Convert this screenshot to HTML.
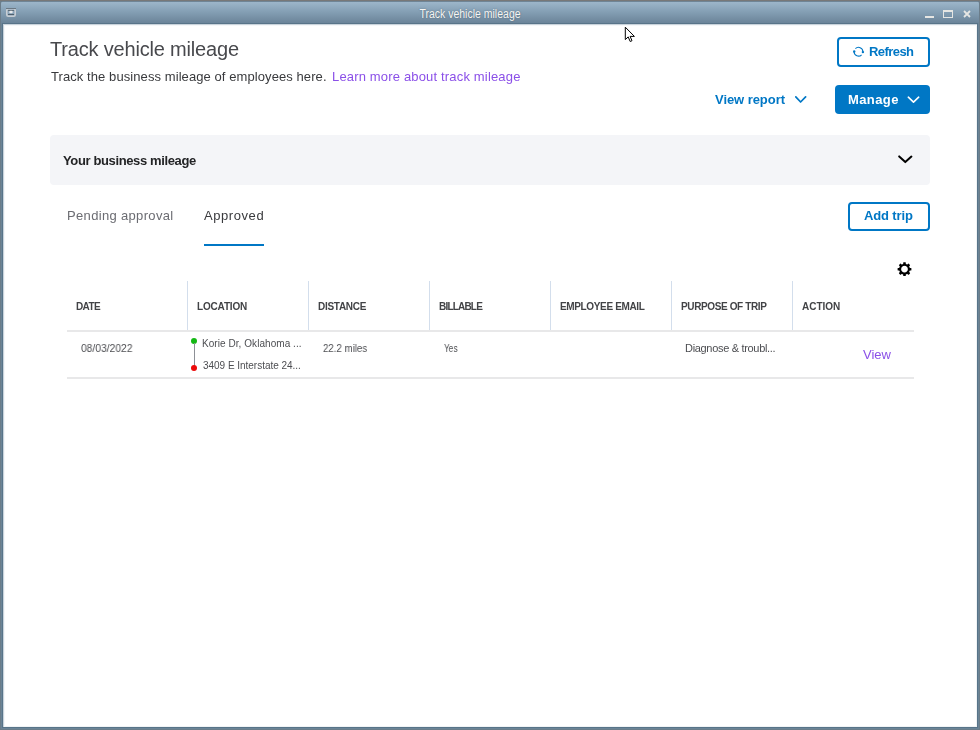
<!DOCTYPE html>
<html><head><meta charset="utf-8">
<style>
*{margin:0;padding:0;box-sizing:border-box}
html,body{width:980px;height:730px;overflow:hidden;background:#6b7d8a;font-family:"Liberation Sans",sans-serif;-webkit-font-smoothing:antialiased}
.t,.hdr,.cell{will-change:transform}
.abs{position:absolute}
#frame{position:absolute;left:1px;top:1px;width:978px;height:728px;background:#6b8497;border-radius:3px 3px 0 0}
#dark{position:absolute;left:2px;top:23px;width:976px;height:705px;background:#587489}
#tb{position:absolute;left:1px;top:1px;width:978px;height:22px;border-radius:3px 3px 0 0;
 background:linear-gradient(#6f8596 0,#6f8596 1px,#9db6ca 1px,#86a1b6 45%,#6b8499 100%);}
#ttl{position:absolute;left:0;top:7px;width:940px;text-align:center;font-size:12px;color:#f6f6f4;text-shadow:0 0 1.5px rgba(30,45,60,.55);transform:scaleX(0.875);transform-origin:470px 0}
#content{position:absolute;left:3px;top:24px;width:974px;height:703px;background:#fff;box-shadow:inset 1px 1px 0 #c9d3db,inset 2px 2px 0 #f5f7f9,inset -1px -1px 0 #f0f3f5}
.t{position:absolute;white-space:nowrap;line-height:1}
.btn{position:absolute;border:2px solid #0077c5;border-radius:4px;background:#fff}
.blue{color:#0077c5}
.hdr{position:absolute;top:302px;font-size:10px;font-weight:bold;color:#424346;white-space:nowrap;line-height:1}
.vl{position:absolute;top:281px;width:1px;height:50px;background:#d3deec}
.cell{position:absolute;font-size:11px;color:#4d4e52;white-space:nowrap;line-height:1}
</style></head><body>
<div class="abs" style="left:0;top:0;width:980px;height:1px;background:#787878"></div>
<div id="frame"></div>
<div id="dark"></div>
<div id="tb"></div>
<div id="content"></div>
<div id="ttl">Track vehicle mileage</div>
<svg class="abs" style="left:6px;top:8px" width="10" height="9" viewBox="0 0 10 9"><rect x="0.75" y="0.75" width="8.5" height="7.5" rx="1.5" fill="#8aa3b8" stroke="#c9ced3" stroke-width="1.5"/><rect x="0" y="0" width="10" height="1" fill="#6b7883"/><rect x="2" y="2" width="6" height="1" fill="#5f6d78"/><ellipse cx="5" cy="4" rx="1.8" ry="1.3" fill="#e8eaec"/><rect x="2" y="6" width="6" height="1" fill="#4d5e6c"/></svg>
<div class="abs" style="left:925px;top:16px;width:9px;height:2px;background:#e6e6e3"></div>
<div class="abs" style="left:943px;top:10px;width:10px;height:8px;border:1px solid #e6e6e3;border-top-width:2px"></div>
<svg class="abs" style="left:963px;top:10px" width="8" height="8" viewBox="0 0 8 8"><path d="M1 1L7 7M7 1L1 7" stroke="#e6e6e3" stroke-width="1.8"/></svg>

<!-- header -->
<div id="h1" class="t" style="left:50.4px;top:39px;font-size:20px;color:#48494d;letter-spacing:-0.18px">Track vehicle mileage</div>
<div id="sub" class="t" style="left:51.0px;top:70px;font-size:13px;color:#393a3d;letter-spacing:0.081px">Track the business mileage of employees here.</div>
<div id="link" class="t" style="left:332.2px;top:70px;font-size:13px;color:#8b50e8;letter-spacing:0.166px">Learn more about track mileage</div>

<div class="btn" style="left:837px;top:37px;width:93px;height:30px"></div>
<svg class="abs" style="left:848px;top:42px" width="22" height="20" viewBox="0 0 22 20"><path d="M7.4 6.6A4.4 4.4 0 0 1 14.9 9.7M6.1 9.7A4.4 4.4 0 0 0 13.6 12.8" fill="none" stroke="#0077c5" stroke-width="1.1"/><circle cx="6.2" cy="9.5" r="1.2" fill="#0077c5"/><circle cx="14.9" cy="10.1" r="1.2" fill="#0077c5"/></svg>
<div id="refresh_txt" class="t blue" style="left:868.6px;top:45px;font-size:13px;font-weight:bold;letter-spacing:-0.567px">Refresh</div>

<div id="viewreport" class="t blue" style="left:715.2px;top:92.5px;font-size:13px;font-weight:bold;letter-spacing:-0.06px">View report</div>
<svg class="abs" style="left:795px;top:96px" width="12" height="8" viewBox="0 0 12 8"><path d="M0.8 0.9L5.6 6L10.6 0.9" fill="none" stroke="#0077c5" stroke-width="1.7" stroke-linecap="round" stroke-linejoin="round"/></svg>

<div class="abs" style="left:835px;top:85px;width:95px;height:29px;background:#0077c5;border-radius:4px"></div>
<div id="manage_txt" class="t" style="left:847.6px;top:93px;font-size:13px;font-weight:bold;color:#fff;letter-spacing:0.4px">Manage</div>
<svg class="abs" style="left:907px;top:96px" width="13" height="8" viewBox="0 0 13 8"><path d="M1.3 1.2L6.5 6.1L11.7 1.2" fill="none" stroke="#fff" stroke-width="1.6" stroke-linecap="round" stroke-linejoin="round"/></svg>

<!-- panel -->
<div class="abs" style="left:50px;top:135px;width:880px;height:50px;background:#f4f5f8;border-radius:4px"></div>
<div id="panel_txt" class="t" style="left:63.4px;top:154px;font-size:13px;font-weight:bold;color:#232426;letter-spacing:-0.37px">Your business mileage</div>
<svg class="abs" style="left:897px;top:155px" width="17" height="10" viewBox="0 0 17 10"><path d="M2.2 1.4L8.3 7.1L14.4 1.6" fill="none" stroke="#000" stroke-width="2" stroke-linecap="round" stroke-linejoin="round"/></svg>

<!-- tabs -->
<div id="pending" class="t" style="left:66.6px;top:209px;font-size:13px;color:#6b6c72;letter-spacing:0.333px">Pending approval</div>
<div id="approved" class="t" style="left:204.4px;top:209px;font-size:13px;color:#393a3d;letter-spacing:0.571px">Approved</div>
<div class="abs" style="left:204px;top:244px;width:60px;height:2px;background:#0077c5"></div>

<div class="btn" style="left:848px;top:202px;width:82px;height:29px"></div>
<div id="addtrip_txt" class="t blue" style="left:864.0px;top:209px;font-size:13px;font-weight:bold;letter-spacing:-0.143px">Add trip</div>

<!-- gear -->
<svg class="abs" style="left:892px;top:257px" width="26" height="25" viewBox="0 0 26 25"><g transform="translate(12.5 12.2)" fill="#000"><circle r="4.4" fill="none" stroke="#000" stroke-width="2.1"/><rect x="-1.3" y="-6.9" width="2.6" height="3" rx="0.5" transform="rotate(0)"/><rect x="-1.3" y="-6.9" width="2.6" height="3" rx="0.5" transform="rotate(45)"/><rect x="-1.3" y="-6.9" width="2.6" height="3" rx="0.5" transform="rotate(90)"/><rect x="-1.3" y="-6.9" width="2.6" height="3" rx="0.5" transform="rotate(135)"/><rect x="-1.3" y="-6.9" width="2.6" height="3" rx="0.5" transform="rotate(180)"/><rect x="-1.3" y="-6.9" width="2.6" height="3" rx="0.5" transform="rotate(225)"/><rect x="-1.3" y="-6.9" width="2.6" height="3" rx="0.5" transform="rotate(270)"/><rect x="-1.3" y="-6.9" width="2.6" height="3" rx="0.5" transform="rotate(315)"/></g></svg>

<!-- table -->
<div class="vl" style="left:187px"></div>
<div class="vl" style="left:308px"></div>
<div class="vl" style="left:429px"></div>
<div class="vl" style="left:550px"></div>
<div class="vl" style="left:671px"></div>
<div class="vl" style="left:792px"></div>
<div id="DATE" class="hdr" style="left:76.0px;letter-spacing:-0.6px">DATE</div>
<div id="LOCATION" class="hdr" style="left:197.2px;letter-spacing:-0.172px">LOCATION</div>
<div id="DISTANCE" class="hdr" style="left:318.0px;letter-spacing:-0.286px">DISTANCE</div>
<div id="BILLABLE" class="hdr" style="left:439.0px;letter-spacing:-0.8px">BILLABLE</div>
<div id="EMAIL" class="hdr" style="left:559.6px;letter-spacing:-0.354px">EMPLOYEE EMAIL</div>
<div id="PURPOSE" class="hdr" style="left:680.6px;letter-spacing:-0.372px">PURPOSE OF TRIP</div>
<div id="ACTION" class="hdr" style="left:801.6px">ACTION</div>
<div class="abs" style="left:67px;top:330px;width:847px;height:2px;background:#e8e8e9"></div>
<div class="abs" style="left:67px;top:377px;width:847px;height:2px;background:#e8e8e9"></div>

<div id="date" class="cell" style="left:80.80px;top:343px;transform-origin:0 0;transform:scaleX(0.9347)">08/03/2022</div>
<div class="abs" style="left:191px;top:338px;width:6px;height:6px;border-radius:50%;background:#14b814"></div>
<div class="abs" style="left:194px;top:343px;width:1px;height:23px;background:#8d9096"></div>
<div class="abs" style="left:191px;top:365px;width:6px;height:6px;border-radius:50%;background:#ec0a0a"></div>
<div id="korie" class="cell" style="left:202.2px;top:339px;font-size:10px;letter-spacing:0.057px">Korie Dr, Oklahoma ...</div>
<div id="addr" class="cell" style="left:203.2px;top:360.5px;font-size:10px;letter-spacing:-0.027px">3409 E Interstate 24...</div>
<div id="miles" class="cell" style="left:322.60px;top:343px;transform-origin:0 0;transform:scaleX(0.8802)">22.2 miles</div>
<div id="yes" class="cell" style="left:444.00px;top:343px;transform-origin:0 0;transform:scaleX(0.7558)">Yes</div>
<div id="diag" class="cell" style="left:685.0px;top:343px;letter-spacing:-0.316px">Diagnose &amp; troubl...</div>
<div id="view" class="t" style="left:863.0px;top:348px;font-size:13px;color:#8b50e8">View</div>

<!-- cursor -->
<svg class="abs" style="left:624px;top:26px" width="12" height="18" viewBox="0 0 12 18"><path d="M1.3 1.2V13.6L4.2 10.9L6.2 15.5L8 14.7L6.1 10.4H10.4Z" fill="#fff" stroke="#000" stroke-width="1" stroke-linejoin="round"/></svg>
</body></html>
